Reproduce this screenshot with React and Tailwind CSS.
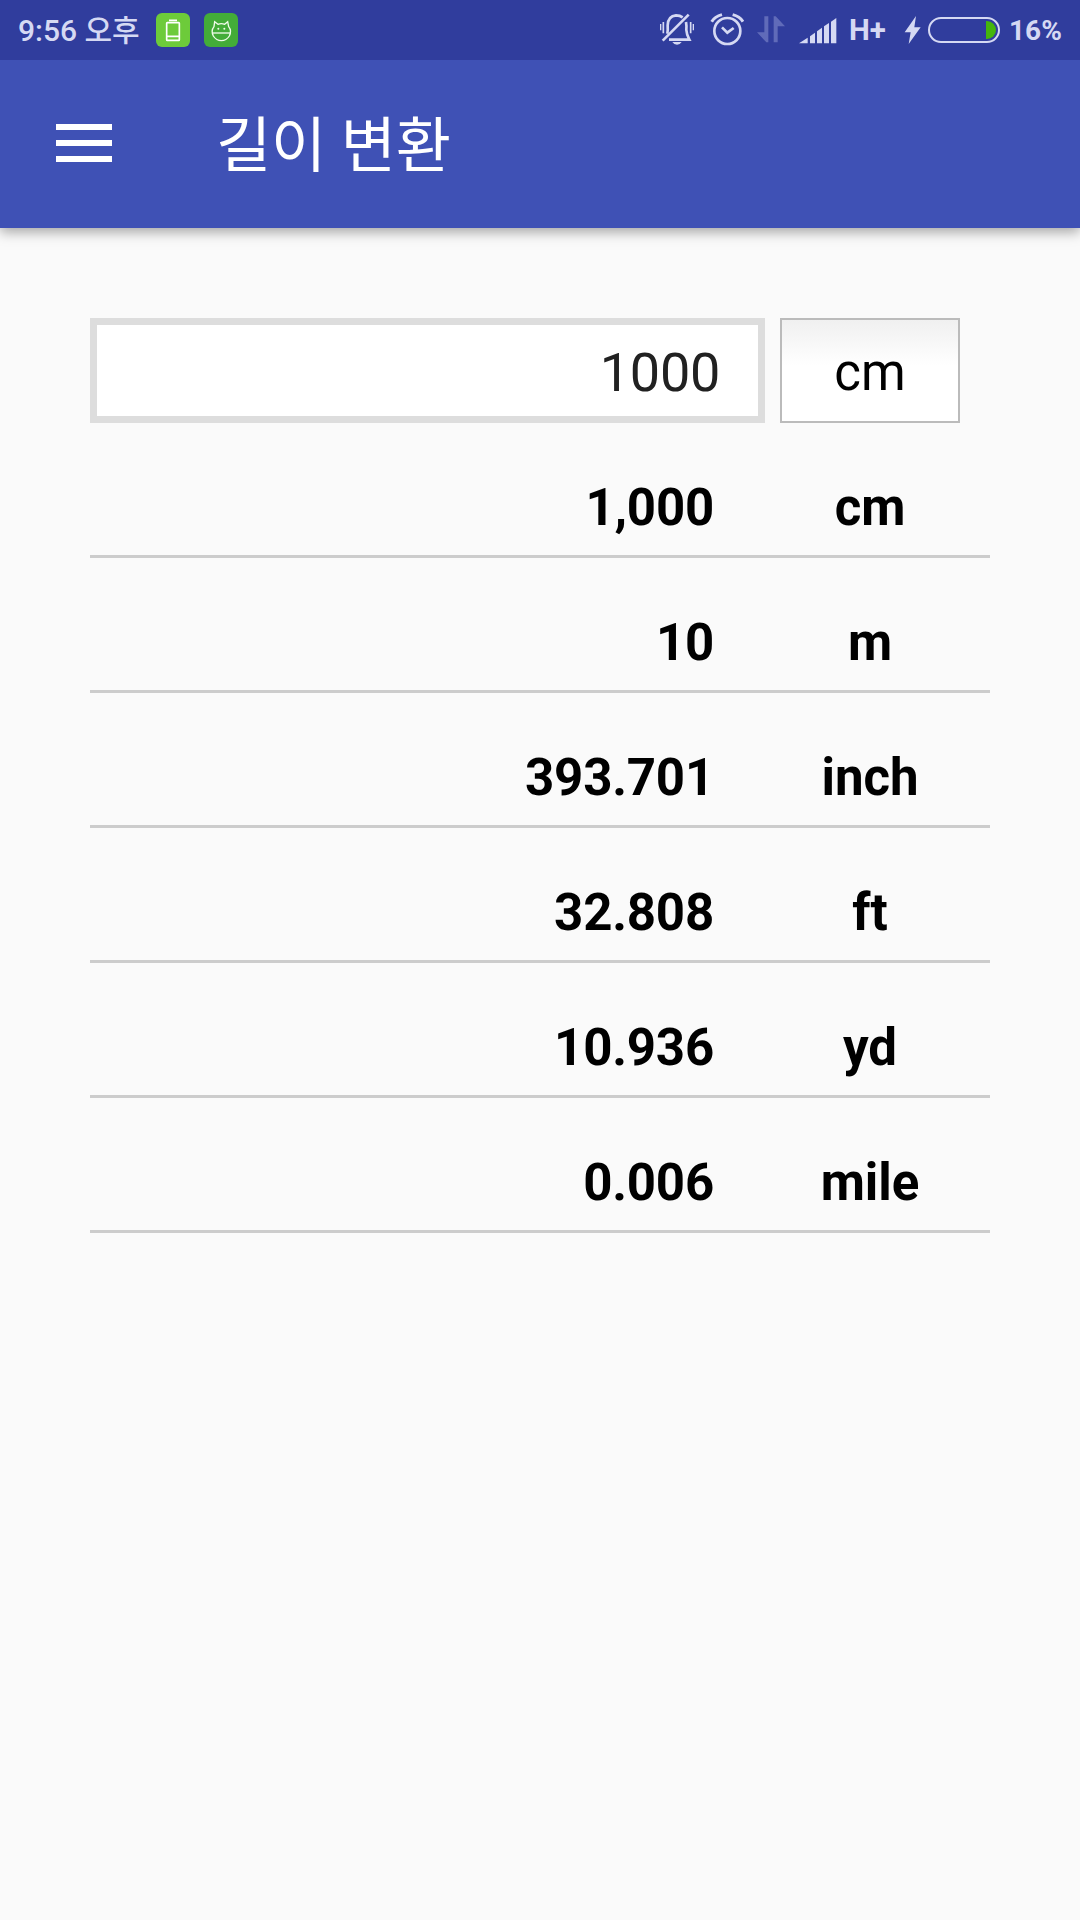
import React from 'react';

const rows = [
  { value: '1,000', unit: 'cm' },
  { value: '10', unit: 'm' },
  { value: '393.701', unit: 'inch' },
  { value: '32.808', unit: 'ft' },
  { value: '10.936', unit: 'yd' },
  { value: '0.006', unit: 'mile' },
];

const BatteryBadge = () => (
  <span className="ml-[35px] flex size-[34px] items-center justify-center rounded-[6px] bg-[#6dcb3a]">
    <svg width="34" height="34" viewBox="0 0 102 102" fill="none" stroke="#fff" strokeWidth="5">
      <rect x="32" y="29" width="38" height="53" rx="2" />
      <path d="M39 22h24M32 70h38" />
    </svg>
  </span>
);

const CatBadge = () => (
  <span className="ml-[14px] flex size-[34px] items-center justify-center rounded-[6px] bg-[#43ac38]">
    <svg width="34" height="34" viewBox="0 0 102 102" fill="none" stroke="#effbe9" strokeWidth="4">
      <path d="M30 41L32 26L42 34Q52 30 62 34L71 26L74 41Q84 53 76 69Q67 83 52 83Q37 83 28 69Q20 53 30 41Z" />
      <path d="M26 60h52" />
      <circle cx="43" cy="47" r="3" fill="#effbe9" stroke="none" />
      <circle cx="61" cy="47" r="3" fill="#effbe9" stroke="none" />
    </svg>
  </span>
);

const BellOffIcon = () => (
  <svg width="38" height="35" viewBox="0 0 114 105" fill="none" stroke="currentColor" strokeWidth="8">
    <path d="M8 36v19M106 36v19" strokeWidth="4" />
    <path d="M16 30v34M98 30v34" strokeWidth="5" />
    <path d="M14 86L92 8" strokeWidth="8" />
    <path d="M28 65Q30 56 29 40Q30 12 54 10Q66 10 74 16" />
    <path d="M84 30Q86 40 85 54Q86 68 94 83H33" />
    <path d="M43 90H71Q66 98 57 98Q48 98 43 90Z" fill="currentColor" stroke="none" />
  </svg>
);

const AlarmIcon = () => (
  <svg width="34" height="35" viewBox="0 0 102 105" fill="none" stroke="currentColor">
    <circle cx="52" cy="57" r="39" strokeWidth="8" />
    <path d="M36 46L52 62L71 48" strokeWidth="8" />
    <path d="M5 29Q14 14 36 8M68 8Q90 14 99 29" strokeWidth="9" />
  </svg>
);

const DataIcon = () => (
  <svg width="28" height="28" viewBox="0 0 84 84" fill="#606bb9">
    <path d="M22 4H34V82H28L0 52H22Z" />
    <path d="M50 4H56L84 34H62V82H50Z" />
  </svg>
);

const SignalIcon = () => (
  <svg width="38" height="26" viewBox="0 0 114 78" fill="currentColor">
    <path d="M0 76L26 59V76Z" />
    <path d="M33 55L48 44V76H33Z" />
    <path d="M54 40L69 29V76H54Z" />
    <path d="M75 25L90 15V76H75Z" />
    <path d="M96 11L112 0V76H96Z" />
  </svg>
);

const ChargingIcon = () => (
  <svg width="17" height="30" viewBox="0 0 51 90" fill="currentColor">
    <path d="M36 3L2 52H20L14 87L50 37H31Z" />
  </svg>
);

const StatusBar = () => (
  <div className="relative z-10 flex h-[60px] items-center bg-[#303d9d] text-[#d5d9f3]">
    <div className="flex h-full w-[121px] shrink-0 items-center whitespace-nowrap pt-[2px] pl-[18px] text-[30px] font-medium leading-none">
      9:56 오후
    </div>
    <BatteryBadge />
    <CatBadge />
    <div className="ml-auto flex h-full items-center">
      <span className="flex pb-[2px]"><BellOffIcon /></span>
      <span className="ml-[14px] flex pb-[2px]"><AlarmIcon /></span>
      <span className="ml-[13px] flex pb-[2px]"><DataIcon /></span>
      <span className="ml-[14px] flex pt-[1px]"><SignalIcon /></span>
      <span className="ml-[12px] w-[38px] pt-[2px] text-[29.5px] font-bold leading-none">H+</span>
      <span className="ml-[17px] flex"><ChargingIcon /></span>
      <span className="ml-[7px] flex h-[26px] w-[72px] items-center justify-end rounded-full border-2 border-[#d5d9f3] pr-[2px]">
        <span className="h-[18px] w-[10px] rounded-r-full bg-[#44b50c]" />
      </span>
      <span className="ml-[9px] w-[71px] pt-[2px] text-[28px] font-bold leading-none">16%</span>
    </div>
  </div>
);

const Toolbar = () => (
  <header className="flex h-[168px] items-center bg-[#3f51b5] text-white shadow-[0_4px_12px_rgba(0,0,0,0.35)]">
    <button className="mb-[2px] ml-[56px] flex w-[56px] flex-col gap-[10px]" aria-label="menu">
      <span className="h-[6px] bg-white" />
      <span className="h-[6px] bg-white" />
      <span className="h-[6px] bg-white" />
    </button>
    <h1 className="ml-[104px] pt-[6px] text-[60px] leading-none tracking-[-0.2px]">길이 변환</h1>
  </header>
);

const ResultRow = ({ value, unit }) => (
  <li className="flex h-[135px] items-end border-b-[3px] border-[#ccc] pb-[17px] text-[51px] font-bold leading-[60px] text-black">
    <span className="w-[624px] text-right tracking-[-0.2px]">{value}</span>
    <span className="ml-[66px] w-[180px] text-center">{unit}</span>
  </li>
);

export default function App() {
  return (
    <div className="flex h-[1920px] w-[1080px] flex-col overflow-hidden bg-[#fafafa] font-[Roboto,'Noto_Sans_CJK_KR',sans-serif]">
      <StatusBar />
      <Toolbar />
      <main className="px-[90px] pt-[90px]">
        <div className="flex h-[105px] gap-[15px]">
          <div className="flex w-[675px] items-center justify-end border-[7px] border-[#ddd] bg-white pt-[5px] pr-[38px] text-[54px] leading-none tracking-[-0.3px] text-[#212121]">
            1000
          </div>
          <button className="w-[180px] border-2 border-[#bbb] bg-linear-to-b from-[#f0f0f0] to-white to-45% pt-[4px] text-[51px] leading-none text-black">
            cm
          </button>
        </div>
        <ul>
          {rows.map((row) => (
            <ResultRow key={row.unit} {...row} />
          ))}
        </ul>
      </main>
    </div>
  );
}
